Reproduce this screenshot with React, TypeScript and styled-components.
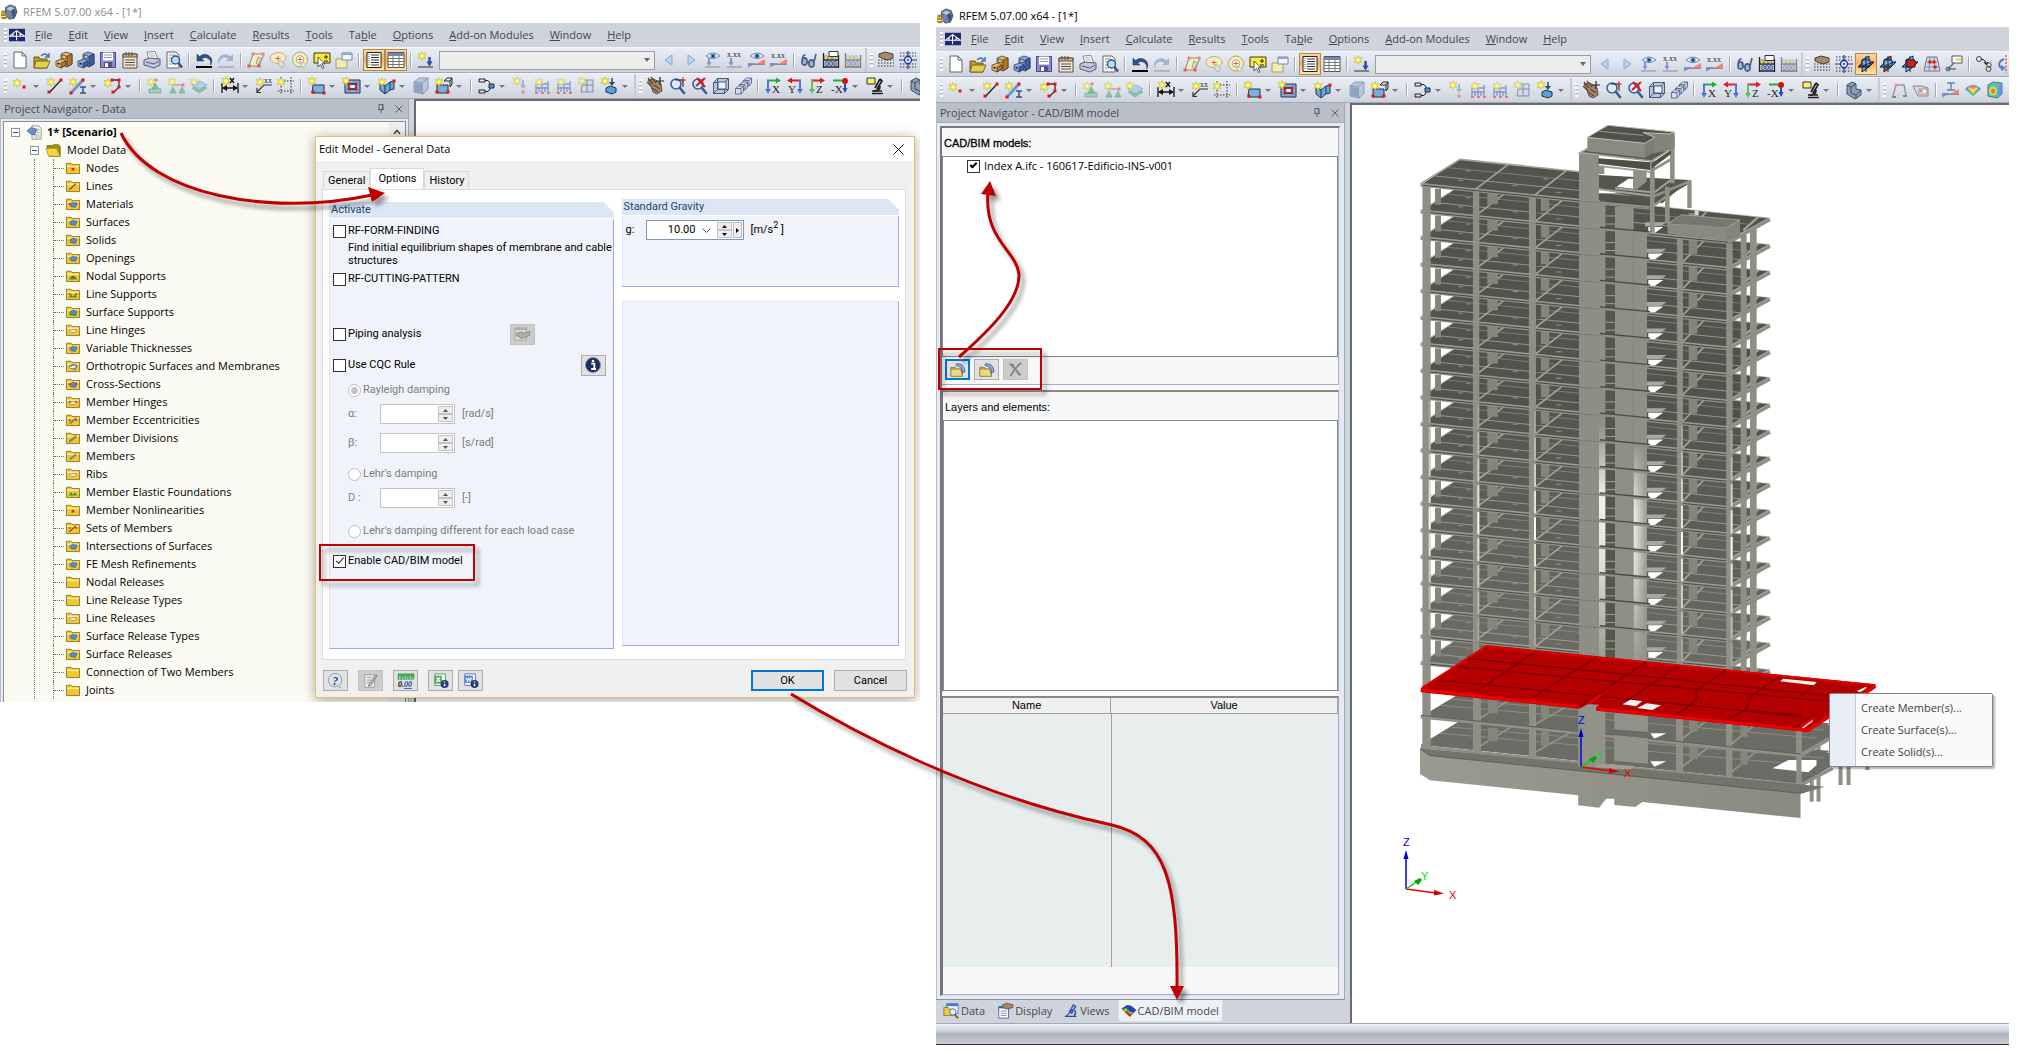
import React from "react";
import styled, { createGlobalStyle, css } from "styled-components";

const ui = `"Open Sans", "Noto Sans", sans-serif`;
const arial = `"Liberation Sans", Arial, sans-serif`;
const dialogFont = `Roboto, "Liberation Sans", sans-serif`;

const Global = createGlobalStyle`
  *, *::before, *::after { box-sizing: border-box; }
  body { margin: 0; background: #fff; font: 11px/14px ${ui}; color: #000; }
  button, input, select { font: inherit; color: inherit; margin: 0; padding: 0; border-radius: 0; }
  ul { list-style: none; margin: 0; padding: 0; }
  svg { display: block; flex: none; overflow: visible; }
  a { color: inherit; text-decoration: none; }
`;

/* ---------- icon drawings (18 x 18) ---------- */

const Star = ({ x = 4, y = 4 }: { x?: number; y?: number }) => (
  <g transform={`translate(${x} ${y})`}>
    <path d="M0-4.5L1.2-1.8 3.800-2.800 2.6 0 3.800 2.800 1.2 1.8 0 4.5-1.2 1.8-3.800 2.800-2.6 0-3.800-2.800-1.2-1.8z" fill="#fbf03c" stroke="#b4aa3c" strokeWidth=".5" />
    <circle r="1.3" fill="#fffbd0" />
  </g>
);
const Dot = ({ x, y, c = "#e81414" }: { x: number; y: number; c?: string }) => (
  <rect x={x - 1.5} y={y - 1.5} width="3" height="3" fill={c} />
);
const Lens = () => (
  <g>
    <circle cx="8" cy="7" r="5" fill="#dcebfa" stroke="#3c5c9c" strokeWidth="1.6" />
    <path d="M12 11l4 5" stroke="#3c5c9c" strokeWidth="2.6" strokeLinecap="round" />
  </g>
);
const Cabinet = ({ c, d }: { c: string; d: string }) => (
  <g stroke="#333" strokeWidth=".7">
    <path d="M6 3l5-2 6 2v10l-5 3-6-3z" fill={c} />
    <path d="M12 5l5-2v10l-5 3z" fill={d} />
    <path d="M1 10l6-2 4 2v4l-5 3-5-2z" fill={c} />
    <path d="M6 12l5-2v4l-5 3z" fill={d} />
    <path d="M7 4l4 1v3l-4-1z" fill="#fff" fillOpacity=".35" />
    <path d="M2.500 12.500l2 .5" stroke="#111" strokeWidth="1.500" />
  </g>
);
const Abacus = ({ dim }: { dim?: boolean }) => (
  <g opacity={dim ? 0.5 : 1}>
    <path d="M1.500 17V2M16.500 17V4M1 16h16M1 9h16" stroke="#222" strokeWidth="1.300" />
    {[4, 8, 12].map((x) => <ellipse key={x} cx={x} cy="6.500" rx="1.700" ry="2" fill="#e8dc70" stroke="#665" strokeWidth=".6" />)}
    {[5, 9, 13].map((x) => <ellipse key={x} cx={x} cy="12.500" rx="1.800" ry="2.200" fill="#8fa8ee" stroke="#335" strokeWidth=".6" />)}
    {!dim && <path d="M7 .5h9v5H7z" fill="#fff" stroke="#334" />}
  </g>
);
const Eye = ({ y = 5 }: { y?: number }) => (
  <g>
    <path d={`M2 ${y}q7-6 14 0q-7 5-14 0z`} fill="#eef3fb" stroke="#7686a8" />
    <circle cx="9" cy={y} r="2.600" fill="#5c84cc" />
    <circle cx="9" cy={y} r="1" fill="#123" />
  </g>
);
const Wedge = () => (
  <g>
    <path d="M0 16.500V12l9 0z" fill="#8c8ce0" />
    <path d="M17 8v5H8z" fill="#f08080" />
    <path d="M0 13.500h17" stroke="#889" />
  </g>
);
const Txt = ({ x, y, s = 7, c = "#222", children }: { x: number; y: number; s?: number; c?: string; children: string }) => (
  <text x={x} y={y} fontSize={s} fill={c} fontFamily="Liberation Serif, serif">{children}</text>
);
const Plane = ({ a, b }: { a: string; b: string }) => (
  <g stroke="#123" strokeWidth="1">
    <path d="M5 5l7-4v11l-7 5z" fill={b} />
    <path d="M1 12l5-5h11l-5 5z" fill={a} />
    <path d="M5 5h8v6H5z" fill="#7cc4f0" fillOpacity=".8" />
    <path d="M9 1v16M1 12l16-5" stroke="#136" />
  </g>
);
const Axis = ({ h, v, t, flip }: { h: string; v: string; t: string; flip?: boolean }) => (
  <g>
    <g transform={flip ? "translate(18 0) scale(-1 1)" : undefined}>
      <path d="M3 3.500h10" stroke={h} strokeWidth="2" />
      <path d="M12 .5l5 3-5 3z" fill={h} />
      <path d="M4 3v11" stroke={v} strokeWidth="2" />
      <path d="M1.500 12h5L4 17z" fill={v} />
      <path d="M4 3v13" stroke="#fff" strokeWidth=".5" />
    </g>
    <Txt x={flip ? 2 : 8} y={16} s={11}>{t}</Txt>
  </g>
);
const Frame = () => (
  <g stroke="#5570b8" fill="none" strokeWidth="1.300">
    <path d="M2 16V7h12v9M2 11h12M8 16V7M14 4v3M5 10v5M11 10v5" />
    <path d="M1 16h3M7 16h3M13 16h3" stroke="#e05050" strokeWidth="2" />
  </g>
);

const icons: Record<string, React.ReactNode> = {
  app: (<g><path d="M5 4l5-3 6 2 2 6-3 7-6 1-4-5z" fill="#6d85a8" stroke="#26364e" strokeWidth=".8" /><path d="M6 5l5-2 4 2-4 3z" fill="#b8cade" /><path d="M11 8l4-3 2 5-3 6z" fill="#3e5678" /><text x="0" y="17" fontSize="13" fontWeight="700" fill="#f6c820" stroke="#6b4d00" strokeWidth=".6" fontFamily="Liberation Sans, sans-serif">5</text></g>),
  bridge: (<g><path d="M0 2h18v14H0z" fill="#1d2a6e" /><path d="M0 10.500h18M8.500 4v11M1 10L8.500 4 17 10M4.500 7v3M12.500 7v3" stroke="#fff" strokeWidth="1.200" fill="none" /></g>),
  new: (<path d="M3 1h8l4 4v12H3zM11 1v4h4" fill="#fff" stroke="#666" />),
  open: (<g><path d="M1 6h5l1 2h7v9H1z" fill="#b79e2c" stroke="#6c5c14" /><path d="M3 10h14l-3 7H1z" fill="#e3cd52" stroke="#7a6818" /><path d="M8 5q4-4 7 0M16 2v4h-4" fill="none" stroke="#4878b0" strokeWidth="1.500" /></g>),
  cabO: <Cabinet c="#f0b45c" d="#b87420" />,
  cabB: <Cabinet c="#86a8ee" d="#3c5cb0" />,
  save: (<g><path d="M1.500 1.500h15v15h-15z" fill="#8c86d8" stroke="#4b4690" /><path d="M4 1.500h10v8H4z" fill="#fff" /><path d="M5 4h8M5 6.500h8" stroke="#99a" /><path d="M5 11h8v6H5z" fill="#55507c" /><path d="M6 12h3v4H6z" fill="#fff" /></g>),
  clip: (<g><path d="M2 3h14v14H2z" fill="#f4e8dc" stroke="#5a4a3c" /><path d="M2 3h14v3H2z" fill="#dcb890" stroke="#5a4a3c" /><path d="M5 1v4M8 1v4M11 1v4M4 9h10M4 11.500h10M4 14h10" stroke="#5a4a3c" /></g>),
  print: (<g><path d="M4 1l8-.5 3 8H6z" fill="#fff" stroke="#888" /><path d="M1 9l5-2 11 1v6l-6 3-10-3z" fill="#c4c6dc" stroke="#555a78" /><path d="M3 11l8 2 5-3" fill="none" stroke="#555a78" /><path d="M6 3l5 0M7 5l5 0" stroke="#aab" /></g>),
  preview: (<g><path d="M2 1h9l3 3v13H2z" fill="#f6f8f6" stroke="#667" /><path d="M4 4h6M4 7h4M4 10h3M4 13h4" stroke="#7a9" /><circle cx="10.500" cy="9" r="4" fill="#b8dcf6" stroke="#357" strokeWidth="1.300" /><path d="M13.500 12l3.500 4.500" stroke="#357" strokeWidth="2.400" /></g>),
  undo: (<g><path d="M2 3v7h7L6.500 8q5-4 9 2 .5 2 0 4 3-4 0-8-5-5-11-.5z" fill="#2e5288" stroke="#1c355e" strokeWidth=".5" /><path d="M1 16h16" stroke="#000" strokeWidth="2" /></g>),
  redo: (<g opacity=".75"><path d="M16 3v7H9l2.500-2q-5-4-9 2-.5 2 0 4-3-4 0-8 5-5 11-.5z" fill="#8ba3c6" /><path d="M1 16h16" stroke="#99a" strokeWidth="1.500" /></g>),
  selPara: (<g><path d="M6 3h11l-5 12H2z" fill="#f2eec4" stroke="#8c8870" /><path d="M11 6l4 2-4 6-2-2z" fill="#dcd8b8" stroke="#887" strokeWidth=".7" /><Dot x={6} y={3} c="#e88" /><Dot x={16} y={3} c="#e88" /><Dot x={2} y={15} c="#e55" /><Dot x={12} y={15} c="#e55" /></g>),
  selEll: (<g><ellipse cx="9" cy="7" rx="8" ry="5.500" fill="#f3eebc" stroke="#b8b08c" /><path d="M9 5v5M6.500 7.500h5" stroke="#e06060" /><path d="M11 9l5 4-3 4-4-4z" fill="#e2dfd6" stroke="#998" strokeWidth=".6" /></g>),
  selCirc: (<g><circle cx="9" cy="8.500" r="7.500" fill="#f3eebc" stroke="#b0a870" /><circle cx="9" cy="8.500" r="3.800" fill="#fff" stroke="#b0a870" /><path d="M9 6v5M6.500 8.500h5" stroke="#e06060" /><path d="M11 11l4 3-2 3-3-3z" fill="#eee" stroke="#998" strokeWidth=".6" /></g>),
  selBox: (<g><path d="M1 2h16v10H1z" fill="#fbe93c" stroke="#3a3a20" /><path d="M13 4v4M11 6h4M11 10h4" stroke="#222" /><path d="M5 6v10l2.500-2.500 2 4 1.500-.7-2-4h3z" fill="#fff" stroke="#222" strokeWidth=".7" /></g>),
  selWin: (<g><path d="M1 8h11v9H1z" fill="#f3eeb0" stroke="#a8a070" /><path d="M7 2h10v7H7z" fill="#f5f6fb" stroke="#7a86b0" /><path d="M7 3h10" stroke="#98a4d0" strokeWidth="2" /></g>),
  nav: (<g><path d="M2 1.500h14v15H2z" fill="#fff" stroke="#222" /><path d="M6 4h8M6 6.500h8M6 9h8M6 11.500h8M6 14h8" stroke="#333" /><path d="M4 3v12" stroke="#555" strokeDasharray="1 1" /></g>),
  table: (<g><path d="M1 1.500h16v15H1z" fill="#fff" stroke="#555" /><path d="M1 2h16v3H1z" fill="#7088b0" /><path d="M1 7.500h16M1 10.500h16M1 13.500h16M6 5v12M12 5v12" stroke="#777" /></g>),
  load: (<g><Star x={5} y={5} /><path d="M1 16h15" stroke="#555" strokeWidth="1.300" /><path d="M12.500 6v5" stroke="#2c4ca8" strokeWidth="2.500" /><path d="M9.500 10.500h6l-3 5z" fill="#2c4ca8" /></g>),
  triL: <path d="M12 4v10L5 9z" fill="#c0d2f0" stroke="#88a4d8" />,
  triR: <path d="M6 4v10l7-5z" fill="#c0d2f0" stroke="#88a4d8" />,
  eyeLoad: (<g><Eye y={5} /><path d="M5 7v5" stroke="#789ad0" strokeWidth="2" /><path d="M2.500 11h5L5 15z" fill="#789ad0" /><path d="M1 16h15" stroke="#889" /></g>),
  xxLoad: (<g><Txt x={1} y={6} s={8}>x.xx</Txt><path d="M5 7v5" stroke="#789ad0" strokeWidth="2" /><path d="M2.500 11h5L5 15z" fill="#789ad0" /><path d="M1 16h15" stroke="#889" /></g>),
  eyeW: (<g><Wedge /><Eye y={5} /></g>),
  xxW: (<g><Wedge /><Txt x={1} y={7} s={8}>x.xx</Txt></g>),
  glasses: (<g fill="none" stroke="#4a5c88" strokeWidth="1.600"><ellipse cx="4.500" cy="10.500" rx="2.600" ry="3.600" fill="#9fb2dc" /><ellipse cx="11.500" cy="12.500" rx="2.600" ry="3.600" fill="#9fb2dc" /><path d="M2.500 8q0-4 3-4M14 11l2-8M7 11l2 1" /></g>),
  abacus: <Abacus />,
  abacus2: <Abacus dim />,
  handGrid: (<g><path d="M1 9h16M1 12h16M1 15h16" stroke="#333" strokeDasharray="1.500 1.500" /><path d="M2 3l6-2 8 2v4l-6 2-8-3z" fill="#a88a6c" stroke="#4e3c2c" /></g>),
  grid: (<g><path d="M1 2h16M1 5h16M1 13h16M1 16h16" stroke="#333" strokeDasharray="1.500 1.500" /><path d="M9 0v18M0 9h18" stroke="#2030a0" strokeWidth="1.200" /><circle cx="9" cy="9" r="3.500" fill="#e4e8f4" stroke="#2030a0" strokeWidth="1.300" /><circle cx="9" cy="9" r="1" fill="#2030a0" /></g>),
  planeA: <Plane a="#e03020" b="#60b0e8" />,
  planeB: <Plane a="#7cc4f0" b="#d84030" />,
  planeC: (<g><Plane a="#7cc4f0" b="#7cc4f0" /><path d="M6 5h8v7H6z" fill="#e81818" stroke="#222" /></g>),
  mesh: (<g><path d="M4 2h10l3 14H1z" fill="#c6dce8" stroke="#778" /><path d="M3 7h12M2 12h14M7 2l-1 14M11 2l1 14" stroke="#889" /><Dot x={7} y={7} /><Dot x={11} y={7} /><Dot x={12} y={12} /></g>),
  snap: (<g><path d="M7 1h10v7H7z" fill="#fff" stroke="#556" /><path d="M11 3h5v3h-5z" fill="#f0e060" /><path d="M9 8l-6 6h8" fill="none" stroke="#5c74a0" strokeWidth="1.500" /><circle cx="3" cy="14" r="2" fill="none" stroke="#456" /></g>),
  rotate: (<g fill="none" stroke="#444"><circle cx="4" cy="4" r="2.500" /><circle cx="13.500" cy="14" r="2.500" /><circle cx="14" cy="10" r="2.200" /><path d="M6 4q5 1 5 5M9 7l2 2.500L13 7" stroke="#111" /></g>),
  mirror: (<g fill="none"><path d="M9 0v18" stroke="#c02020" strokeDasharray="2 1.500" /><path d="M7 4q-7 3-4 8l3 1M4 15l3-2-3-2" stroke="#5878c0" strokeWidth="2" /></g>),
  node: (<g><Star x={5} y={6} /><Dot x={12} y={10} /></g>),
  line: (<g><path d="M3 16L15 3" stroke="#222" strokeWidth="1.300" /><Star x={5} y={5} /><Dot x={3} y={15} /><Dot x={15} y={3} /></g>),
  member: (<g><path d="M2 16L14 3" stroke="#88b0dc" strokeWidth="3.500" /><path d="M2 16L14 3" stroke="#456" strokeWidth=".8" /><Star x={4} y={5} /><Dot x={2} y={16} /><Dot x={14} y={3} /><path d="M11 10h6M11 16h6M14 10v6" stroke="#345090" strokeWidth="1.500" /></g>),
  poly: (<g><path d="M7 3h8v7l-6 6" fill="none" stroke="#333" strokeWidth="1.300" /><Star x={4} y={6} /><Dot x={8} y={3} /><Dot x={15} y={3} /><Dot x={15} y={10} /><Dot x={9} y={15} /></g>),
  sup1: (<g opacity=".65"><Star x={5} y={5} /><Dot x={10} y={3} c="#e55" /><path d="M9 6l4 6H6z" fill="#58b070" stroke="#286" strokeWidth=".6" /><path d="M3 12h12v4H3z" fill="#8cc89c" stroke="#286" strokeWidth=".6" /></g>),
  sup2: (<g opacity=".65"><path d="M3 8h13" stroke="#a66" strokeWidth="1.200" /><Star x={4} y={5} /><Dot x={15} y={8} c="#e55" /><path d="M5 10l3 6H2zM14 10l3 6h-6z" fill="#68b880" stroke="#286" strokeWidth=".6" /></g>),
  sup3: (<g opacity=".7"><path d="M2 11l8-4 7 4-8 5z" fill="#74bc8c" stroke="#387" strokeWidth=".6" /><path d="M2 8l8-4 7 4-8 5z" fill="#9cc8ec" stroke="#579" strokeWidth=".6" /><Star x={4} y={5} /></g>),
  dim: (<g><path d="M1 6v10M17 6v10M2 11h14" stroke="#111" strokeWidth="1.300" /><path d="M6 8l-5 3 5 3zM12 8l5 3-5 3z" fill="#111" /><Star x={5} y={4} /><path d="M9 1l4 5M13 1L9 6" stroke="#111" strokeWidth="1.300" /></g>),
  xx: (<g><path d="M17 8H9L2 15M2 11v4.500h4" stroke="#333" fill="none" strokeWidth="1.200" /><Star x={5} y={5} /><Txt x={9} y={6} s={8}>xx</Txt></g>),
  dots: (<g><path d="M4 0v17M14 0v17M1 4h16M1 14h16" stroke="#333" strokeDasharray="1.500 1.500" /><Star x={4} y={5} /></g>),
  surf: (<g><path d="M5 8h11v8H4z" fill="#7cb0e0" stroke="#234" /><Star x={4} y={4} /><Dot x={5} y={15} /><Dot x={16} y={16} /></g>),
  opening: (<g><path d="M2 3h15v13H2z" fill="#7cb0e0" stroke="#234" /><path d="M6 7h7v5H6z" fill="#e8eef6" stroke="#123" strokeWidth="1.300" /><Star x={3} y={4} /><Dot x={6} y={7} /><Dot x={13} y={7} /><Dot x={6} y={12} /><Dot x={13} y={12} /></g>),
  surf3: (<g><path d="M2 6l5 3 5-4 4-1v8l-4 1-5 4-5-4z" fill="#6ca8d8" stroke="#235" /><path d="M7 9v8M12 5v8" stroke="#235" /><Star x={4} y={5} /><Dot x={16} y={4} /></g>),
  solid: (<g><path d="M2 5l5-4h9v11l-5 5-9-2z" fill="#b8c8dc" stroke="#7c8ca4" strokeWidth=".8" /><path d="M3 6l7 1v9l-7-1z" fill="#8ca4c4" /><path d="M2 5l8 1 6-5M10 6l1 11" fill="none" stroke="#7c8ca4" strokeWidth=".8" /></g>),
  solid2: (<g><path d="M2 8h11v8H2z" fill="#78acdc" stroke="#234" /><path d="M9 4h6v6M9 4l3-3h5v6l-2 3M15 4l2-3" fill="none" stroke="#222" /><Star x={4} y={5} /><Dot x={2} y={15} /><Dot x={13} y={15} /></g>),
  flow: (<g><path d="M1 2h6v3H1zM1 13h6v3H1zM7 3.500h3l3 4M7 14.500h3l3-4" fill="none" stroke="#222" /><path d="M11 7h5v4h-5z" fill="#4c90e0" stroke="#234" /></g>),
  loadN: (<g opacity=".8"><path d="M11 3v6" stroke="#88a8e0" strokeWidth="2" /><path d="M8 8h6l-3 4z" fill="#88a8e0" /><Star x={5} y={4} /><Dot x={11} y={15} c="#e77" /></g>),
  loadF: (<g opacity=".65"><Frame /><Star x={5} y={5} /></g>),
  loadS: (<g opacity=".65"><path d="M5 3h10v12H3z" fill="#c8d8ee" stroke="#567" /><path d="M4 8h11M9 3v12" stroke="#567" /><Star x={4} y={4} /></g>),
  loadC: (<g><path d="M11 1v6" stroke="#346" strokeWidth="1.500" /><path d="M8 5h6l-3 4z" fill="#346" /><path d="M5 11l4-2 6 2v4l-4 2-6-2z" fill="#58a0d8" stroke="#234" /><Star x={4} y={4} /></g>),
  hand: (<g><path d="M2 3l3 6 2 6 4 2 5-3-1-7-7-5z" fill="#a4886c" stroke="#4a3828" strokeWidth=".8" /><path d="M2 1l5 6M5 0l5 6M1 5l5 5M6 11l6 4M8 8l6 4" stroke="#5e4630" strokeWidth="1.300" /><path d="M14 0v8M10 4h8" stroke="#222" strokeWidth="1.200" /></g>),
  zoom: (<g><Lens /><path d="M7 3h8v7" fill="none" stroke="#222" /><path d="M15 0v6M12 3h6" stroke="#d22" /></g>),
  zoomX: (<g><Lens /><path d="M7 1l8 9M15 1L6 9" stroke="#d02020" strokeWidth="2" /></g>),
  cube: (<g fill="none" stroke="#4c5878"><path d="M1.500 5.500l4-4h11v11l-4 4h-11z" fill="#b8c8e4" /><path d="M5.500 1.500v11h11M5.500 12.500l-4 4M12.500 5.500h-11M12.500 5.500v11M12.500 5.500l4-4" /><path d="M6 5h8v7H6z" fill="#eef2fa" /></g>),
  cubes: (<g fill="#d0dcf0" stroke="#4c5878" strokeWidth=".8"><path d="M9.500 3.500l3-2.500h5v5l-2.500 3h-5.500zM9.500 3.500H15V9M15 3.500l2.500-2.500" /><path d="M5.500 7.500l3-2.500h5v5l-2.500 3H5.500zM5.500 7.500H11V13M11 7.500l2.500-2.500" /><path d="M1.500 11.500l3-2.500h5v5L7 17H1.500zM1.500 11.500H7V17M7 11.500L9.500 9" /></g>),
  ax: <Axis h="#20b030" v="#2048d0" t="X" />,
  ay: <Axis h="#d82020" v="#2048d0" t="Y" flip />,
  az: <Axis h="#d82020" v="#20b030" t="Z" />,
  amx: (<g><path d="M2 3.500h9" stroke="#20b030" strokeWidth="2" /><circle cx="14" cy="4" r="3" fill="#d01010" /><path d="M14 7v5" stroke="#2048d0" strokeWidth="2" /><path d="M11.500 11h5L14 16z" fill="#2048d0" /><Txt x={0} y={16} s={11}>-X</Txt></g>),
  scope: (<g><path d="M1 1h8v6H1z" fill="#fbf06c" stroke="#333" /><path d="M14 2l-5 9M14 2l2 2-5 8M8 14q6 0 6-5" stroke="#222" strokeWidth="1.800" fill="none" /><path d="M6 16.500h11M6 14l10 0" stroke="#222" strokeWidth="1.500" /></g>),
  lsolid: (<g><path d="M2 4l5-3 4 2v5l5 1v5l-6 4-8-5z" fill="#8aa0b8" stroke="#3c4c60" /><path d="M2 4l4 2v6l5 2v4M6 6l5-3M11 14l5-5" fill="none" stroke="#3c4c60" /></g>),
  frameG: (<g><path d="M3 15L6 4h8l2 10" fill="none" stroke="#999" strokeWidth="1.500" /><path d="M2 16h4M13 15h4" stroke="#5a5" strokeWidth="2" /><Dot x={6} y={4} c="#e99" /></g>),
  tag: (<g><path d="M1 5h8l7 2v8H6z" fill="#d8d8d8" stroke="#888" /><path d="M7 8h8v5H7z" fill="#f0f0f0" stroke="#999" /><Dot x={9} y={10} c="#e88" /></g>),
  ibeam: (<g><Wedge /><path d="M5 2h8M5 9h8M9 2v7" stroke="#68a" strokeWidth="1.500" /></g>),
  fan: (<g><path d="M9 15L1 8q8-8 16 0z" fill="#5c88e0" /><path d="M9 15L3 8q6-6 12 0z" fill="#58c878" /><path d="M9 13L4 7q5-4 10 0z" fill="#f0d850" /><path d="M9 8L5 6q4-3 8 0z" fill="#f08060" /></g>),
  ccube: (<g><path d="M2 4l5-3 9 1v11l-5 4-9-2z" fill="#58c0b0" stroke="#578" /><ellipse cx="7" cy="10" rx="4" ry="4.500" fill="#c8e050" /><ellipse cx="7" cy="10" rx="2" ry="2.500" fill="#f07040" /><path d="M13 5l3-3v11l-4 4z" fill="#6890e0" /></g>),
  data: (<g><path d="M4 1h13v11H4z" fill="#eef4ff" stroke="#4878c8" /><path d="M4 2h13" stroke="#4878c8" strokeWidth="3" /><path d="M1 5h5l1 2h4v7H1z" fill="#f2cc3c" stroke="#94761c" /><circle cx="11" cy="10" r="3.600" fill="#dcecfa" stroke="#567" /><path d="M13 13l4 4" stroke="#7a5230" strokeWidth="2" /></g>),
  display: (<g><path d="M2 4h11v13H2z" fill="#fff" stroke="#3860b8" /><path d="M2 5h11" stroke="#3860b8" strokeWidth="2" /><path d="M4 9h7M4 11.500h7M4 14h7" stroke="#88a" /><path d="M6 2l5-2 7 2v3l-6 2-6-2z" fill="#a48464" stroke="#4e3c2c" strokeWidth=".7" /></g>),
  views: (<g><path d="M1 16h15M3 16l8-9M12 1l3 2-5 9-3-2z" stroke="#2c4c9c" strokeWidth="1.500" fill="#90b0e4" /><path d="M14 8q2 4-1 7" stroke="#2c4c9c" strokeWidth="1.800" fill="none" /></g>),
  cad: (<g><path d="M0 6l6-4q5-1 9 3l3 3-8 8z" fill="#2040d8" /><path d="M0 6l10 10 5-5q-6-1-9-6z" fill="#28c048" /><path d="M2 8l8 8 4-4q-6-1-9-6z" fill="#f0e020" /><path d="M4 10l6 6 3-3q-4-1-7-5z" fill="#e03020" /><path d="M0 6l6-4q5-1 9 3l3 3-8 8z" fill="none" stroke="#222" strokeWidth=".6" /></g>),
  folderArrow: (<g><path d="M1 6h5l1 2h7v8H1z" fill="#cdb648" stroke="#7c6c20" strokeWidth=".8" /><path d="M1 8h11l2 8H1z" fill="#e9d987" stroke="#8c7c30" strokeWidth=".8" /><path d="M7 2q9-1 10 9l-3 1Q14 5 7 4z" fill="#90a8dc" stroke="#334c80" strokeWidth=".8" /></g>),
  del: <path d="M2 2q6 5 13 14M16 1Q8 7 3 17M5 2l3 6M11 12l2 3" stroke="#84847c" strokeWidth="2.200" fill="none" />,
  help: (<g><circle cx="8" cy="8" r="7.500" fill="#dde4ef" stroke="#8c96a8" /><path d="M12 13l3 4-6-2z" fill="#dde4ef" stroke="#8c96a8" strokeWidth=".6" /><text x="5" y="13" fontSize="13" fontWeight="700" fontStyle="italic" fill="#26408c" fontFamily="Liberation Serif, serif">?</text></g>),
  edit: (<g><path d="M2 2h11v14H2z" fill="#eeeee8" stroke="#999" /><path d="M4 5h6M4 8h5M4 11h4" stroke="#999" /><path d="M16 3l-7 11-3 1 1-3 7-10z" fill="#b4b4ac" stroke="#777" strokeWidth=".8" /></g>),
  units: (<g><path d="M0 1h18v6H0z" fill="#48b058" stroke="#2c7c3c" strokeWidth=".6" /><path d="M2 7V4M5 7V5M8 7V4M11 7V5M14 7V4M17 7V5" stroke="#e4ffe8" strokeWidth=".8" /><text x="0" y="16" fontSize="9" fontWeight="700" fontStyle="italic" fontFamily="Liberation Serif, serif">0.<tspan fill="#2848a8" textDecoration="underline">00</tspan></text></g>),
  xls: (<g><path d="M2 1h12v13H2z" fill="#f4fbf4" stroke="#4a9a50" /><path d="M2 3h8v9H2z" fill="#58a860" /><path d="M4 5l4 5M8 5l-4 5" stroke="#fff" strokeWidth="1.500" /><circle cx="13" cy="12.500" r="4.500" fill="#263c78" /><path d="M13 12v3M13 9.500v1.300" stroke="#fff" strokeWidth="1.600" /></g>),
  doc: (<g><path d="M2 1h12v13H2z" fill="#f4f8fd" stroke="#4878c0" /><path d="M2 3h9v8H2z" fill="#5080cc" /><path d="M3.500 5l1.500 4 1.500-3L8 9l1.500-4" fill="none" stroke="#fff" strokeWidth="1.300" /><circle cx="13" cy="12.500" r="4.500" fill="#263c78" /><path d="M13 12v3M13 9.500v1.300" stroke="#fff" strokeWidth="1.600" /></g>),
  info: (<g><circle cx="9" cy="9" r="8.500" fill="#1c2c60" stroke="#8894b8" /><path d="M7 7.500h3.500V13M7 13.500h5.500" stroke="#fff" strokeWidth="2" fill="none" /><circle cx="9" cy="4.500" r="1.500" fill="#fff" /></g>),
  pipe: (<g><path d="M1 2h13v14H1z" fill="#d8d8d0" stroke="#999" strokeWidth=".8" /><path d="M1 3.500h13" stroke="#aaa" strokeWidth="2" /><path d="M3 8l5-1 4 1 6-2v4l-5 3-6 1-1-2-3-1z" fill="#b0b0a6" stroke="#808078" strokeWidth=".8" /></g>),
  modelDoc: (<g><path d="M6 1h8l3 3v13H6z" fill="#f4f4f4" stroke="#888" /><path d="M12 6h3M12 9h3M9 12h6M9 14.500h6" stroke="#999" /><path d="M0 7l5-4 7 2-3 7-4-1z" fill="#6c90c4" stroke="#34507c" strokeWidth=".7" /></g>),
  folderOpen: (<g><path d="M1 4h6l1-1h6l2 2v11H4z" fill="#a08c1c" stroke="#6c5c10" strokeWidth=".8" /><path d="M0 7h12l4 9H3z" fill="#f0d83c" stroke="#94801c" strokeWidth=".8" /></g>),
};

const Icon = ({ n, s = 18 }: { n: string; s?: number }) => (
  <svg width={s} height={s} viewBox="0 0 18 18" aria-hidden="true">{icons[n]}</svg>
);

/* ---------- page and window shells ---------- */

const Page = styled.main`
  position: relative;
  display: flex;
  align-items: flex-start;
  gap: 16px;
  min-height: 100vh;
  padding-right: 19px;
  overflow: hidden;
`;
const AppWindow = styled.section<{ $share: number; $tall?: boolean }>`
  position: relative;
  flex: ${(p) => p.$share} 1 0;
  min-width: 0;
  display: flex;
  flex-direction: column;
  overflow: hidden;
  ${(p) => p.$tall && css`padding-top: 4px; height: calc(100vh - 11px);`}
`;
const TitleBar = styled.header<{ $idle?: boolean }>`
  display: flex;
  align-items: center;
  gap: 6px;
  flex: none;
  height: 23px;
  padding-left: 1px;
  color: ${(p) => (p.$idle ? "#8c8c8c" : "#000")};
`;
const MenuBar = styled.nav`
  display: flex;
  align-items: center;
  flex: none;
  height: 24px;
  gap: 16px;
  padding-left: 4px;
  background: #cfd3dc;
  color: #43474e;
`;
const Grip = styled.span`
  flex: none;
  width: 3px;
  height: 14px;
  margin-right: 2px;
  background: repeating-linear-gradient(#fff 0 2px, #aab0bc 2px 3px, transparent 3px 4px);
`;
const MenuLogo = styled.span`
  display: flex;
  margin: 0 -6px 0 -16px;
`;
const MenuLink = styled.a`
  white-space: nowrap;
`;
const ToolBar = styled.div`
  display: flex;
  align-items: center;
  flex: none;
  height: 26px;
  padding-left: 4px;
  overflow: hidden;
  background: linear-gradient(#e9edf6, #dde1ea 50%, #ced2dc);
  border-top: 1px solid #f3f5fa;
  border-bottom: 1px solid #a5a9b3;
`;
const ToolButton = styled.button<{ $on?: boolean }>`
  flex: none;
  display: grid;
  place-items: center;
  width: 22px;
  height: 22px;
  border: 1px solid ${(p) => (p.$on ? "#b08a50" : "transparent")};
  background: ${(p) => (p.$on ? "linear-gradient(#fcd9a8, #f9ae5a 45%, #fde9a0)" : "none")};
`;
const SplitButton = styled(ToolButton)`
  display: flex;
  align-items: center;
  gap: 3px;
  width: 35px;
  padding-left: 3px;
  border: 0;
`;
const Separator = styled.span`
  flex: none;
  width: 2px;
  height: 14px;
  margin: 0 3px;
  border-left: 1px solid #a4a8b2;
  border-right: 1px solid #fff;
`;
const GroupEnd = styled.span`
  flex: none;
  width: 2px;
  height: 24px;
  margin: 0 3px 0 1px;
  background: #c5cad5;
`;
const ToolSelect = styled.select`
  flex: none;
  width: 216px;
  height: 19px;
  margin: 0 3px 0 2px;
  appearance: none;
  border: 1px solid #9b9ea4;
  background: #ededed url("data:image/svg+xml,%3Csvg xmlns='http://www.w3.org/2000/svg' width='8' height='5'%3E%3Cpath d='M1 0h6L4 4z' fill='%23666'/%3E%3C/svg%3E") no-repeat right 3px center;
`;
const Caret = () => (
  <svg width="6" height="3" viewBox="0 0 6 3" aria-hidden="true"><path d="M0 0h6L3 3z" fill="#707684" /></svg>
);

const menus = [["F", "", "ile"], ["E", "", "dit"], ["V", "", "iew"], ["I", "", "nsert"], ["C", "", "alculate"], ["R", "", "esults"], ["T", "", "ools"], ["b", "Ta", "le"], ["O", "", "ptions"], ["A", "", "dd-on Modules"], ["W", "", "indow"], ["H", "", "elp"]];

const bar1 = "new open cabO cabB save clip print preview | undo redo | selPara selEll selCirc selBox selWin | nav table | load = triL triR eyeLoad xxLoad eyeW xxW | glasses abacus abacus2 / handGrid grid planeA planeB planeC mesh snap | rotate mirror".split(" ");
const bar2 = "node+ line member+ poly+ | sup1 sup2 sup3 | dim+ xx dots | surf+ opening+ surf3+ solid solid2+ | flow+ loadN loadF loadF loadS loadC+ / hand zoom zoomX cube cubes | ax ay az amx+ scope+ | lsolid+ / frameG tag | ibeam fan ccube".split(" ");

function Tools({ items, on }: { items: string[]; on: string[] }) {
  return (
    <ToolBar role="toolbar">
      <Grip />
      {items.map((it, i) => {
        if (it === "|") return <Separator key={i} />;
        if (it === "=") return <ToolSelect key={i} aria-label="Load case" defaultValue=""><option value=""></option></ToolSelect>;
        if (it === "/") return <React.Fragment key={i}><GroupEnd /><Grip /></React.Fragment>;
        if (it.endsWith("+")) return <SplitButton key={i} aria-label={it.slice(0, -1)}><Icon n={it.slice(0, -1)} /><Caret /></SplitButton>;
        return <ToolButton key={i} aria-label={it} $on={on.includes(it)}><Icon n={it} /></ToolButton>;
      })}
    </ToolBar>
  );
}

function Chrome({ idle, on }: { idle?: boolean; on: string[] }) {
  return (
    <>
      <TitleBar $idle={idle}><Icon n="app" s={16} />RFEM 5.07.00 x64 - [1*]</TitleBar>
      <MenuBar>
        <Grip />
        <MenuLogo><Icon n="bridge" s={16} /></MenuLogo>
        {menus.map(([k, a, b]) => <MenuLink href="#" key={a + k + b}>{a}<u>{k}</u>{b}</MenuLink>)}
      </MenuBar>
      <Tools items={bar1} on={on} />
      <Tools items={bar2} on={[]} />
    </>
  );
}

const Workspace = styled.div`
  display: flex;
  flex: 1;
  min-height: 0;
  gap: 5px;
  background: #cfd3dc;
`;
const Dock = styled.aside`
  flex: none;
  width: 409px;
  display: flex;
  flex-direction: column;
  background: #e6eaf3;
  border-left: 1px solid #b6bcc8;
  border-right: 1px solid #a4aab6;
`;
const DockHeader = styled.div`
  display: flex;
  align-items: center;
  flex: none;
  height: 20px;
  padding: 0 4px 0 3px;
  gap: 8px;
  background: #b8bfc9;
  border-bottom: 1px solid #a5acb8;
  color: #474b52;
  span { flex: 1; }
`;
const HeaderButton = styled.button`
  display: grid;
  place-items: center;
  width: 10px;
  height: 14px;
  border: 0;
  background: none;
`;
const DockTitle = ({ children }: { children: string }) => (
  <DockHeader>
    <span>{children}</span>
    <HeaderButton aria-label="Pin"><svg width="8" height="9" viewBox="0 0 8 9"><path d="M1 5.500h6M2 5V.5h4V5M4 6v3M5.500 1v4" stroke="#5c626c" fill="none" /></svg></HeaderButton>
    <HeaderButton aria-label="Close"><svg width="8" height="8" viewBox="0 0 8 8"><path d="M.5.5l7 7M7.500.5l-7 7" stroke="#5c626c" /></svg></HeaderButton>
  </DockHeader>
);
const Canvas = styled.div`
  flex: 1;
  min-width: 0;
  position: relative;
  overflow: hidden;
  background: #fff;
  border-left: 2px solid #6a6a6a;
  border-top: 2px solid #6a6a6a;
`;

/* ---------- tree ---------- */

const TreeBox = styled.div`
  display: flex;
  flex: 1;
  margin: 2px 2px 0;
  background: #fbfbf3;
  border: 1px solid #8a8e96;
  border-bottom: 0;
`;
const ScrollTrack = styled.div`
  width: 16px;
  padding: 7px 4px;
  background: #f0f0f0;
`;
const Tree = styled.ul`
  flex: 1;
  padding: 1px 0 3px 7px;
`;
const TreeRow = styled.div<{ $strong?: boolean }>`
  display: flex;
  align-items: center;
  height: 18px;
  gap: 5px;
  white-space: nowrap;
  font-weight: ${(p) => (p.$strong ? 700 : 400)};
`;
const Toggle = styled.button`
  width: 9px;
  height: 9px;
  margin-right: 2px;
  border: 1px solid #8896a4;
  background: linear-gradient(#3c5070, #3c5070) center / 5px 1px no-repeat #fff;
`;
const Branch = styled.ul`
  margin-left: 19px;
`;
const Leaves = styled.ul`
  margin-left: 4px;
  padding-left: 18px;
  border-left: 1px dotted #777;
`;
const Leaf = styled(TreeRow)`
  border-left: 1px dotted #777;
  gap: 6px;
  &::before { content: ""; width: 10px; margin-right: -4px; border-top: 1px dotted #777; }
`;

const FolderIcon = ({ k }: { k: string }) => (
  <svg width="14" height="12" viewBox="0 0 15 14" preserveAspectRatio="none" aria-hidden="true">
    <path d="M.5 1.500h5l1 1.500h8v10.500H.5z" fill="#edc82e" stroke="#8c741c" />
    <path d="M1 4h13v2H1z" fill="#fbe98c" />
    {k.includes("b") && <path d="M4 7l3-2 5 1-2 5-5-1z" fill="#5c8cd0" stroke="#2c4c80" strokeWidth=".6" />}
    {k.includes("r") && <path d="M6 7h3v3H6z" fill="#d22" />}
    {k.includes("d") && <path d="M3.500 11.500l7-7" stroke="#7a3a20" strokeWidth="1.300" />}
    {k.includes("D") && <path d="M4 11l7-6" stroke="#8a8a70" strokeWidth="2.500" />}
    {k.includes("g") && <path d="M3 11l2.500-4L8 11zM7 11l2.500-4 2.500 4z" fill="#3a9a48" />}
    {k.includes("w") && <path d="M3.500 9l3-2.500h5L9 10H5z" fill="#f0f2f4" stroke="#778" strokeWidth=".7" />}
    {k.includes("R") && <path d="M3 6h2v2H3zM10 6h2v2h-2z" fill="#d22" />}
  </svg>
);

const nodes: [string, string][] = [
  ["Nodes", "r"], ["Lines", "d"], ["Materials", "bR"], ["Surfaces", "b"], ["Solids", "b"], ["Openings", "b"], ["Nodal Supports", "rg"],
  ["Line Supports", "gR"], ["Surface Supports", "gb"], ["Line Hinges", "w"], ["Variable Thicknesses", "b"],
  ["Orthotropic Surfaces and Membranes", "wb"], ["Cross-Sections", "Rb"], ["Member Hinges", "wR"], ["Member Eccentricities", "DR"],
  ["Member Divisions", "Dd"], ["Members", "D"], ["Ribs", "w"], ["Member Elastic Foundations", "g"], ["Member Nonlinearities", "r"],
  ["Sets of Members", "dR"], ["Intersections of Surfaces", "b"], ["FE Mesh Refinements", "b"], ["Nodal Releases", ""],
  ["Line Release Types", ""], ["Line Releases", "w"], ["Surface Release Types", "b"], ["Surface Releases", "b"],
  ["Connection of Two Members", ""], ["Joints", ""],
];

/* ---------- dialog ---------- */

const Dialog = styled.section`
  position: absolute;
  top: 136px;
  right: 5px;
  width: 600px;
  padding-bottom: 6px;
  background: #f0f0f0;
  border: 1px solid #e9bf62;
  box-shadow: 0 2px 12px rgba(0, 0, 0, 0.35);
  font-family: ${dialogFont};
`;
const DialogTitle = styled.header`
  display: flex;
  justify-content: space-between;
  align-items: center;
  height: 24px;
  padding: 0 10px 0 3px;
  background: #fff;
  font-family: ${ui};
`;
const CloseButton = styled.button`
  display: grid;
  border: 0;
  background: none;
`;
const Tabs = styled.div`
  display: flex;
  align-items: flex-end;
  padding: 7px 0 0 7px;
`;
const Tab = styled.button<{ $on?: boolean }>`
  height: ${(p) => (p.$on ? 21 : 18)}px;
  padding: 0 ${(p) => (p.$on ? 7 : 4)}px;
  border: 1px solid #d9d9d9;
  border-bottom: 0;
  background: ${(p) => (p.$on ? "#fff" : "#f0f0f0")};
`;
const TabPanel = styled.div`
  display: flex;
  gap: 8px;
  align-items: stretch;
  height: 471px;
  margin: 0 8px 0 6px;
  padding: 9px 6px 10px;
  background: #fff;
  border: 1px solid #dcdcdc;
`;
const Column = styled.div<{ $w: number; $top?: number; $bottom?: number }>`
  flex: ${(p) => p.$w} 1 0;
  min-width: 0;
  display: flex;
  flex-direction: column;
  gap: 14px;
  padding: ${(p) => p.$top ?? 0}px 0 ${(p) => p.$bottom ?? 0}px;
`;
const Group = styled.fieldset<{ $fill?: boolean }>`
  min-width: 0;
  margin: 0;
  padding: 0 0 0 3px;
  border: 1px solid;
  border-color: #dce6f4 #a6a6ea #a6a6ea #dce6f4;
  background: #f0f4fa;
  ${(p) => (p.$fill ? "flex: 1;" : "height: 88px;")}
`;
const Legend = styled.div`
  height: 17px;
  margin: -1px -1px 0 -4px;
  padding: 1px 2px 0;
  background: linear-gradient(225deg, #fff 7px, #dce6f4 8px);
  border-bottom: 1px solid #fff;
  color: #23466e;
`;
const Row = styled.div<{ $mt?: number; $in?: number; $off?: boolean }>`
  display: flex;
  align-items: center;
  height: 20px;
  margin-top: ${(p) => p.$mt ?? 0}px;
  padding-left: ${(p) => p.$in ?? 0}px;
  color: ${(p) => (p.$off ? "#7c7c7c" : "#000")};
  white-space: nowrap;
`;
const Check = styled.input`
  appearance: none;
  flex: none;
  width: 13px;
  height: 13px;
  margin: 0 2px 0 0;
  border: 1px solid #333;
  background: #fff;
  display: grid;
  place-items: center;
  &[type="radio"] { border-radius: 50%; border-color: #c0c0c0; }
  &[type="radio"]:checked::after { content: ""; width: 7px; height: 7px; border-radius: 50%; background: #c4c4c4; }
  &[type="checkbox"]:checked::after { content: ""; width: 8px; height: 4px; border: solid #333; border-width: 0 0 1px 1px; transform: rotate(-48deg) translate(1px, -1px); }
`;
const Hint = styled.p`
  margin: 0 0 0 15px;
  line-height: 13px;
  width: 264px;
`;
const Spacer = styled.span`
  flex: 1;
`;
const IconButton = styled.button<{ $off?: boolean; $gap?: number; $focus?: boolean }>`
  display: grid;
  place-items: center;
  width: 25px;
  height: 21px;
  margin-right: ${(p) => p.$gap ?? 0}px;
  border: ${(p) => (p.$focus ? "2px solid #0078d7" : p.$off ? "1px solid #c2c2c2" : "1px solid #adadad")};
  background: ${(p) => (p.$off ? "#cccccc" : "#e1e1e1")};
`;
const FieldLabel = styled.label<{ $w: number }>`
  width: ${(p) => p.$w}px;
`;
const SpinBox = styled.span<{ $w: number; $active?: boolean }>`
  display: flex;
  align-items: center;
  width: ${(p) => p.$w}px;
  height: 20px;
  margin-right: 7px;
  padding: 1px;
  background: #fff;
  border: 1px solid ${(p) => (p.$active ? "#7a9ab8" : "#c4c4c4")};
  input { flex: 1; min-width: 0; height: 14px; border: 0; outline: 0; background: none; text-align: right; }
`;
const Steps = styled.span`
  display: flex;
  flex-direction: column;
  width: 15px;
  button { display: grid; place-items: center; height: 8px; border: 1px solid #c4c4c4; background: #eee; }
`;
const DropButton = styled.button`
  display: grid;
  place-items: center;
  width: 21px;
  height: 14px;
  border: 0;
  background: none;
`;
const MoreButton = styled(DropButton)`
  width: 9px;
  height: 16px;
  margin-left: 1px;
  border: 1px solid #bbb;
  background: #eee;
`;
const DialogFooter = styled.footer`
  display: flex;
  align-items: center;
  padding: 10px 7px 0;
`;
const PushButton = styled.button<{ $main?: boolean }>`
  width: 73px;
  height: 21px;
  margin-left: 10px;
  background: #e1e1e1;
  border: ${(p) => (p.$main ? "2px solid #0078d7" : "1px solid #adadad")};
`;
const Sup = styled.sup`
  font-size: 9px;
  line-height: 0;
`;
const Tri = ({ d, c = "#555" }: { d: "u" | "d" | "r"; c?: string }) => (
  <svg width="5" height="5" viewBox="0 0 5 5" aria-hidden="true"><path d={d === "u" ? "M0 4h5L2.500 1z" : d === "d" ? "M0 1h5L2.500 4z" : "M1 0v5l3-2.500z"} fill={c} /></svg>
);
const StepButtons = ({ off }: { off?: boolean }) => (
  <Steps>
    <button aria-label="Increase" disabled={off}><Tri d="u" c={off ? "#555" : "#000"} /></button>
    <button aria-label="Decrease" disabled={off}><Tri d="d" c={off ? "#555" : "#000"} /></button>
  </Steps>
);

function DampingField({ id, label, unit, mt }: { id: string; label: string; unit: string; mt: number }) {
  return (
    <Row $mt={mt} $in={15} $off>
      <FieldLabel $w={32} htmlFor={id}>{label}</FieldLabel>
      <SpinBox $w={75}><input id={id} disabled /><StepButtons off /></SpinBox>
      {unit}
    </Row>
  );
}

function ModelDialog() {
  return (
    <Dialog role="dialog" aria-label="Edit Model - General Data">
      <DialogTitle>
        Edit Model - General Data
        <CloseButton aria-label="Close"><svg width="11" height="11" viewBox="0 0 11 11"><path d="M.5.5l10 10M10.500.5l-10 10" stroke="#111" /></svg></CloseButton>
      </DialogTitle>
      <Tabs><Tab>General</Tab><Tab $on>Options</Tab><Tab>History</Tab></Tabs>
      <TabPanel>
        <Column $w={284} $top={3}>
          <Group $fill>
            <Legend>Activate</Legend>
            <Row $mt={2}><Check type="checkbox" id="form" /><label htmlFor="form">RF-FORM-FINDING</label></Row>
            <Hint>Find initial equilibrium shapes of membrane and cable structures</Hint>
            <Row $mt={2}><Check type="checkbox" id="cut" /><label htmlFor="cut">RF-CUTTING-PATTERN</label></Row>
            <Row $mt={35}><Check type="checkbox" id="pipe" /><label htmlFor="pipe">Piping analysis</label><Spacer /><IconButton $off $gap={78} aria-label="Piping settings"><Icon n="pipe" s={16} /></IconButton></Row>
            <Row $mt={11}><Check type="checkbox" id="cqc" /><label htmlFor="cqc">Use CQC Rule</label><Spacer /><IconButton $gap={7} aria-label="Info"><Icon n="info" s={16} /></IconButton></Row>
            <Row $mt={5} $in={15} $off><Check type="radio" name="damp" id="ray" defaultChecked disabled /><label htmlFor="ray">Rayleigh damping</label></Row>
            <DampingField id="alpha" label="α:" unit="[rad/s]" mt={4} />
            <DampingField id="beta" label="β:" unit="[s/rad]" mt={9} />
            <Row $mt={11} $in={15} $off><Check type="radio" name="damp" id="lehr" disabled /><label htmlFor="lehr">Lehr's damping</label></Row>
            <DampingField id="dd" label="D :" unit="[-]" mt={4} />
            <Row $mt={13} $in={15} $off><Check type="radio" name="damp" id="lehr2" disabled /><label htmlFor="lehr2">Lehr's damping different for each load case</label></Row>
            <Row $mt={10}><Check type="checkbox" id="bim" defaultChecked /><label htmlFor="bim">Enable CAD/BIM model</label></Row>
          </Group>
        </Column>
        <Column $w={277} $bottom={3}>
          <Group>
            <Legend>Standard Gravity</Legend>
            <Row $mt={4}>
              <FieldLabel $w={20} htmlFor="grav">g:</FieldLabel>
              <SpinBox $w={98} $active>
                <input id="grav" defaultValue="10.00" />
                <DropButton aria-label="Values"><svg width="9" height="5" viewBox="0 0 9 5"><path d="M.5.5l4 4 4-4" fill="none" stroke="#555" /></svg></DropButton>
                <StepButtons />
                <MoreButton aria-label="More"><Tri d="r" c="#000" /></MoreButton>
              </SpinBox>
              <span>[m/s<Sup>2</Sup> ]</span>
            </Row>
          </Group>
          <Group $fill />
        </Column>
      </TabPanel>
      <DialogFooter>
        <IconButton $gap={10} aria-label="Help"><Icon n="help" s={16} /></IconButton>
        <IconButton $gap={10} $off aria-label="Edit"><Icon n="edit" s={16} /></IconButton>
        <IconButton $gap={10} aria-label="Units"><Icon n="units" s={16} /></IconButton>
        <IconButton $gap={5} aria-label="Export to spreadsheet"><Icon n="xls" s={16} /></IconButton>
        <IconButton aria-label="Export to document"><Icon n="doc" s={16} /></IconButton>
        <Spacer />
        <PushButton $main>OK</PushButton>
        <PushButton>Cancel</PushButton>
      </DialogFooter>
    </Dialog>
  );
}

/* ---------- CAD/BIM panel ---------- */

const PanelStack = styled.div`
  flex: 1;
  min-height: 0;
  display: flex;
  flex-direction: column;
  gap: 5px;
  margin: 3px 4px 3px 3px;
  background: #fbfbf3;
  border: 1px solid #e4e4e4;
  border-top: 2px solid #777;
  border-left: 2px solid #777;
  font-family: ${arial};
`;
const Pane = styled.div<{ $grow: number }>`
  flex: ${(p) => p.$grow} 1 0;
  min-height: 0;
  display: flex;
  flex-direction: column;
  background: #f7f7f7;
  border-right: 1px solid #a6a6ea;
`;
const LowerPane = styled(Pane)`
  border-top: 2px solid #888;
  border-left: 1px solid #777;
`;
const PaneLabel = styled.h2<{ $bold?: boolean }>`
  flex: none;
  margin: 0;
  height: 28px;
  padding: 8px 2px 0;
  font-size: 11px;
  line-height: 14px;
  font-weight: 400;
  -webkit-text-stroke: ${(p) => (p.$bold ? "0.3px #000" : 0)};
`;
const ListBox = styled.div`
  flex: 1;
  padding: 2px 0 0 24px;
  background: #fff;
  border: 1px solid #828790;
  font-family: ${ui};
`;
const ModelItem = styled.label`
  display: flex;
  align-items: center;
  height: 14px;
  gap: 4px;
  input { width: 13px; height: 13px; appearance: none; border: 1px solid #333; background: #fff; display: grid; place-items: center; }
  input::after { content: ""; width: 7px; height: 4px; border: solid #000; border-width: 0 0 2px 2px; transform: rotate(-45deg) translate(1px, -1px); }
`;
const ActionBar = styled.div`
  display: flex;
  gap: 4px;
  flex: none;
  height: 28px;
  padding: 2px 3px;
  border-bottom: 1px solid #a6a6ea;
`;
const PropertyTable = styled.table`
  flex: 1;
  display: flex;
  flex-direction: column;
  background: #e8eeee;
  thead, tbody { display: flex; }
  tbody { flex: 1; }
  tr { flex: 1; display: flex; }
  th, td { flex: 227; padding: 0; font-weight: 400; border-right: 1px solid #a0a0a0; }
  th { background: #f0f0f0; border-bottom: 1px solid #a0a0a0; font-size: 11px; line-height: 15px; }
  th:first-child, td:first-child { flex: 168; }
  td:last-child { border-right: 0; }
`;
const PaneFooter = styled.div`
  flex: none;
  height: 28px;
  border-bottom: 1px solid #a6a6ea;
`;
const BottomTabs = styled.nav`
  display: flex;
  align-items: center;
  flex: none;
  height: 24px;
  padding-left: 3px;
  gap: 4px;
  background: #cfd3dc;
  border-top: 1px solid #888e98;
  margin: 0 -1px;
`;
const BottomTab = styled.a<{ $on?: boolean }>`
  display: flex;
  align-items: center;
  gap: 2px;
  height: 22px;
  margin-bottom: 1px;
  padding: 0 3px;
  color: #474b52;
  border-radius: 0 0 4px 4px;
  background: ${(p) => (p.$on ? "#eef0f2" : "none")};
  border: solid ${(p) => (p.$on ? "#c4e4e6" : "transparent")};
  border-width: 0 1px 1px;
`;
const StatusBar = styled.footer`
  flex: none;
  height: 22px;
  border-top: 1px solid #a4a8b2;
  border-bottom: 1px solid #333;
  background: linear-gradient(#f0f2f6, #c9ced8 40%, #aab0ba 50%, #c4c9d3 90%);
`;
const ContextMenu = styled.ul`
  position: absolute;
  left: 477px;
  top: 588px;
  width: 164px;
  padding: 3px 1px;
  background: linear-gradient(to right, #e8edf6 25px, #c4c6ca 25px 26px, #fafafa 26px);
  border: 1px solid #868686;
  border-radius: 2px;
  box-shadow: 2px 2px 2px rgba(0, 0, 0, 0.3);
  button { display: block; width: 100%; height: 22px; padding-left: 30px; border: 0; background: none; text-align: left; color: #404247; }
`;

/* ---------- tower ---------- */

const wall = "#8f8f86";
const lite = "#a3a397";

function shade(i: number) {
  const v = Math.round(82 + Math.max(0, i - 8) * 2.5);
  return `rgb(${v},${v + 1},${v - 6})`;
}

function Storey({ i }: { i: number }) {
  const y = 225 + 79.7 * i;
  const f = (x: number) => y + (x - 62) * 0.1;
  const lit = Math.max(0, 1 - Math.abs(i - 12) / 5);
  const glow = `rgba(250,250,232,${lit})`;
  const right = i === 0 ? 750 : 985;
  const back = i === 0 ? 870 : 1110;
  const top = (x: number) => y - 77 + (x - 180) * 0.104;
  const col = (x: number, w: number, up = 80) => (
    <g key={x}>
      <rect x={x} y={f(x) + 4} width={w} height={up} fill={wall} />
      <rect x={x + w - 6} y={f(x) + 8} width="6" height={up - 12} fill={glow} />
      <path d={`M${x} ${f(x) + 4}v${up}`} stroke={lite} strokeWidth="1.500" />
    </g>
  );
  return (
    <g>
      {/* slab seen from above */}
      <path d={`M62 ${y}L180 ${top(180)}L${back} ${top(back)}L${right} ${f(right) - 4}z`} fill={shade(i)} />
      <g stroke={lite} strokeWidth="2.500" fill="none">
        <path d={`M105 ${y - 27}L${right + 40} ${y - 27 + (right - 65) * 0.1}`} />
        <path d={`M145 ${y - 52}L${right + 60} ${y - 52 + (right - 85) * 0.1}`} strokeWidth="1.500" />
        <path d={`M62 ${y - 4}L180 ${top(180)}L${back} ${top(back)}`} strokeWidth={i === 0 ? 5 : 2} />
        <path d={`M222 ${f(222)}L325 ${top(325)}M400 ${f(400)}L500 ${top(500)}`} strokeWidth="5" />
        {i > 0 && <path d={`M842 ${f(842)}L920 ${top(920)}`} strokeWidth="5" />}
        <path d={`M175 ${y - 14}h14M338 ${y + 1}h16M468 ${y + 22}h16M198 ${y - 42}h14M430 ${y - 18}h14`} stroke="#85857b" strokeWidth="4" />
      </g>
      {/* rear walls */}
      {i > 0 && (
        <g fill="#85857b">
          <rect x="262" y={y - 60} width="32" height="38" />
          <rect x="422" y={y - 45} width="26" height="44" />
          <rect x="105" y={y - 68} width="18" height="48" />
          <rect x="405" y={y - 46} width="17" height="50" fill={shade(i)} />
          <rect x="866" y={y + 4} width="26" height="44" />
          <path d={`M735 ${y + 32}h65l-18 12h-47z`} fill="#a8a89e" />
          <path d={`M745 ${y + 46}h45l-26 18h-19z`} fill="#fff" />
        </g>
      )}
      {/* front columns below the slab */}
      {[[68, 24], [220, 18], [388, 20]].map(([x, w]) => col(x, w))}
      {i > 0 && [[832, 17], [980, 18]].map(([x, w]) => col(x, w))}
      {i > 0 && (
        <g>
          <rect x="1022" y={f(985) - 22} width="18" height="84" fill={wall} />
          <rect x="1050" y={f(985) - 40} width="20" height="84" fill={wall} />
          <path d={`M985 ${f(985)}L1110 ${top(1110) + 4}`} stroke={wall} strokeWidth="11" />
          <path d={`M1030 ${f(985) - 36}L1075 ${f(985) - 76}`} stroke={lite} strokeWidth="7" />
          <path d={`M985 ${f(985) - 6}L1110 ${top(1110) - 2}`} stroke="#c6c6ba" strokeWidth="2" />
        </g>
      )}
      {/* slab edge */}
      <path d={`M62 ${y}L${right} ${f(right)}`} stroke={wall} strokeWidth="11" />
      <path d={`M62 ${y - 5}L${right} ${f(right) - 5}`} stroke="#bdbdb0" strokeWidth="1.500" />
      <path d={`M70 ${y + 1}L${right} ${f(right)}`} stroke="#4a4a44" strokeWidth="3" />
    </g>
  );
}

function Tower() {
  const levels = Array.from({ length: 19 }, (_, k) => 18 - k);
  return (
    <svg width="655" height="918" viewBox="1352 105 655 918" role="img" aria-label="Building model">
      <defs>
        <linearGradient id="core" x1="0" y1="0" x2="0" y2="1">
          <stop offset="0" stopColor="#8f8f86" /><stop offset=".48" stopColor="#909087" /><stop offset=".64" stopColor="#f2f2e4" /><stop offset=".76" stopColor="#e6e6d8" /><stop offset="1" stopColor="#96968c" />
        </linearGradient>
        <linearGradient id="coreWide" x1="0" y1="0" x2="1" y2="0">
          <stop offset="0" stopColor="#8f8f86" stopOpacity="0" /><stop offset="1" stopColor="#8f8f86" stopOpacity=".9" />
        </linearGradient>
        <linearGradient id="base" x1="0" y1="0" x2="1" y2="0"><stop offset="0" stopColor="#9a9a90" /><stop offset="1" stopColor="#8a8a80" /></linearGradient>
      </defs>
      {/* storeys under the highlighted slab and the basement */}
      <g transform="translate(1400 600) scale(.4005 .3333)">
        {[1028, 1045, 1100, 1120, 1167].map((x) => <path key={x} d={`M${x - 5} 330h10v${x < 1050 ? 275 : x > 1150 ? 180 : 225}h-10z`} fill={wall} />)}
        {[432, 350].map((y) => <path key={y} d={`M52 ${y + 2}L150 ${y - 70}L1072 ${y + 20}L1000 ${y + 110}z`} fill="#6e6e68" />)}
        {[434, 350].map((y) => (
          <g key={y}>
            <path d={`M52 ${y}L150 ${y - 68}L1130 ${y + 30}L1000 ${y + 118}z`} fill="#6c6c66" />
            <path d={`M100 ${y - 34}L1040 ${y + 64}M130 ${y - 52}L1060 ${y + 40}`} stroke="#8c8c82" strokeWidth="3" />
            <path d={`M190 ${y + 12}L280 ${y - 55}M330 ${y + 28}L430 ${y - 40}M700 ${y + 70}L780 ${y}M820 ${y + 90}L900 ${y + 10}`} stroke="#93938a" strokeWidth="5" />
            <path d={`M625 ${y + 50}h40l-30 16z`} fill="#fff" />
            <path d={`M220 ${y - 50}h24v40h-24zM352 ${y - 40}h20v44h-20zM722 ${y}h22v44h-22zM850 ${y + 10}h18v50h-18z`} fill="#85857b" />
          </g>
        ))}
        <path d="M930 505l40-25h70v15l-20 22z" fill="#fff" />
        {[[56, 20], [183, 18], [323, 16], [690, 16], [815, 14], [990, 12]].map(([x, w], k) => <rect key={x} x={x} y={270 + x * 0.12} width={w} height={170 + (k ? 10 : 0)} fill={wall} stroke={lite} strokeWidth="1" />)}
        <path d="M52 350L1000 466L1072 416" fill="none" stroke={wall} strokeWidth="11" />
        <path d="M52 346L1000 462" stroke="#4c4c46" strokeWidth="2" />
        <path d="M52 440L1000 556L1080 505" fill="none" stroke={wall} strokeWidth="10" />
        <path d="M50 445L1060 560L1000 582L50 475z" fill="#74746c" />
        <path d="M50 447L75 467L1000 580V654L605 606L587 621L535 615V596H515L497 623L445 616V586L75 541L50 522z" fill="url(#base)" />
        <path d="M50 447L75 467L1000 580" fill="none" stroke="#55554e" strokeWidth="2" />
        <path d="M445 310h68v190h-68zM535 320h84v76l-84-8z" fill="#92928a" />
        <path d="M535 405l84 10v76l-84-8z" fill="#92928a" />
        <path d="M495 492l90 6-10 12-90-8z" fill="#a0a098" />
      </g>
      <g transform="translate(1400 110) scale(.3333)">
        {levels.map((i) => <Storey key={i} i={i} />)}
        {/* lift core */}
        <rect x="537" y="130" width="60" height="1540" fill="#8e8e86" />
        <rect x="597" y="270" width="20" height="1400" fill="url(#core)" />
        <rect x="617" y="290" width="28" height="1380" fill="#55564e" />
        <rect x="645" y="290" width="56" height="1380" fill="#8f8f87" />
        <rect x="701" y="370" width="40" height="1300" fill="url(#core)" />
        <rect x="701" y="370" width="40" height="1300" fill="url(#coreWide)" />
        {Array.from({ length: 17 }, (_, i) => {
          const y = 270 + i * 79.7;
          return (
            <g key={i}>
              <path d={`M537 ${y + 4}l60 4`} stroke="#5c5c54" strokeDasharray="10 4" strokeWidth="1.500" />
              <path d={`M617 ${y + 48}h28M617 ${y + 72}h28`} stroke={lite} strokeWidth="3" />
              <path d={`M597 ${y + 6}l150 14`} stroke={wall} strokeWidth="9" />
              <path d={`M600 ${y + 2}l150 14`} stroke="#4a4a44" strokeWidth="4" />
            </g>
          );
        })}
        {/* penthouse */}
        <path d="M597 145H760V250H597z" fill="#fff" />
        <path d="M597 195l270 15-80 70-190-45z" fill="#55564e" />
        <path d="M650 230l35-24h15v30z" fill="#fff" />
        <path d="M595 145l160 12v24l-160-20z" fill="#4e4f47" />
        <path d="M597 168l158 18M597 238l160 20v22M645 235l110 12M760 250l60-46" stroke={lite} strokeWidth="6" fill="none" />
        <path d="M700 180l40 5v30l-28 22h-12z" fill={wall} />
        <path d="M750 150h14v218h-14zM795 230h14v110h-14zM810 75h14v145h-14zM862 212h13v82h-13zM597 170h16v22h-16z" fill={wall} />
        <path d="M755 262l118-50M764 285l40-30M755 182l65-38" stroke={wall} strokeWidth="8" />
        <path d="M755 160l58-40v12l-58 44z" fill="#4e4f47" />
        <path d="M540 128l22-12 245 5-52 32z" fill="#5a5b53" stroke={lite} strokeWidth="5" />
        <path d="M562 84l62-38 200 20v50l-60 14z" fill="#84847a" />
        <path d="M562 82L735 100V143L562 124z" fill="#8a8a80" />
        <path d="M735 100l28-18v45l-28 16z" fill="#7c7c74" />
        <path d="M562 82L624 46 822 66 808 72 730 68 765 82 735 100z" fill="#50514a" stroke="#c0c0b4" strokeWidth="3" />
        <path d="M600 64l130 12" stroke="#c0c0b4" strokeWidth="2" />
        {/* roof terrace box */}
        <path d="M803 340l42-26 175 16v48l-40 14-177-22z" fill="#84847a" />
        <path d="M803 342l174 12 43-24-175-16z" fill="#77776f" stroke="#b0b0a4" strokeWidth="2" />
        <path d="M803 342l174 12v38l-174-22z" fill="#8a8a82" />
        <rect x="884" y="302" width="12" height="14" fill="#d8d8cc" />
      </g>
      {/* highlighted slab */}
      <g transform="translate(1400 600) scale(.4005 .3333)">
        <path d="M52 264L215 135L1187 253V264L1020 396L490 332V322L497 314L470 312L447 326L52 277z" fill="#b40000" />
        <path d="M52 270L447 321M490 326L1018 391L1187 259" fill="none" stroke="#f00000" strokeWidth="9" />
        <path d="M56 262L215 139L1187 255" fill="none" stroke="#e80000" strokeWidth="5" />
        <path d="M190 275L340 153M335 290L490 172M450 318L615 185M545 320L695 197M690 345L740 300V270L815 210M815 360L862 330L880 285L950 228M1000 290L1045 240M95 240L1000 350M140 200L1080 305M170 175L700 240L1090 290M860 330L1000 345M980 385L1040 340" fill="none" stroke="#800000" strokeWidth="4" />
        <path d="M470 312L500 285M1000 380L1035 355" stroke="#f00000" strokeWidth="6" />
        <path d="M957 236l84 10-8 10-84-12zM1140 273l22-12 4 2-16 14zM555 313l20-14 30 4-16 16zM592 324l24-14 36 6-22 14z" fill="#f4f0ee" />
        <path d="M1003 383l26-22 3 2-24 22z" fill="#e8d8d8" />
      </g>
      {[{ x: 1581, y: 767 }, { x: 1406, y: 889 }].map((o) => (
        <g key={o.x} transform={`translate(${o.x} ${o.y})`} fontFamily="Liberation Sans, sans-serif" fontSize="11">
          <path d="M0 0V-34" stroke="#0000e0" strokeWidth="1.500" /><path d="M-2.500-30h5L0-39z" fill="#0000c0" />
          <path d="M0 0l30 4" stroke="#f00000" strokeWidth="1.500" /><path d="M28 1l10 3.500-10 2z" fill="#d00000" />
          <path d="M0 0l12-8" stroke="#00d000" strokeWidth="1.500" /><path d="M8-8l6-3 2 2-4 5z" fill="#00a800" />
          <text x="-3" y="-43" fill="#0000e0">Z</text><text x="43" y="10" fill="#e00000">X</text><text x="15" y="-9" fill="#00e000">Y</text>
        </g>
      ))}
    </svg>
  );
}

/* ---------- callouts drawn over both windows ---------- */

const Callouts = styled.svg`
  position: absolute;
  inset: 0;
  pointer-events: none;
  filter: drop-shadow(4px 5px 2px rgba(0, 0, 0, 0.4));
`;

export default function App() {
  return (
    <Page>
      <Global />
      <AppWindow $share={920}>
        <Chrome idle on={["nav", "table"]} />
        <Workspace>
          <Dock>
            <DockTitle>Project Navigator - Data</DockTitle>
            <TreeBox>
              <Tree>
                <li>
                  <TreeRow $strong><Toggle aria-label="Collapse" /><Icon n="modelDoc" s={15} />1* [Scenario]</TreeRow>
                  <Branch>
                    <li>
                      <TreeRow><Toggle aria-label="Collapse" /><Icon n="folderOpen" s={16} />Model Data</TreeRow>
                      <Leaves>
                        {nodes.map(([t, k]) => <li key={t}><Leaf><FolderIcon k={k} />{t}</Leaf></li>)}
                      </Leaves>
                    </li>
                  </Branch>
                </li>
              </Tree>
              <ScrollTrack><svg width="8" height="6" viewBox="0 0 8 6"><path d="M1 5l3-3.500L7 5" fill="none" stroke="#444" strokeWidth="1.500" /></svg></ScrollTrack>
            </TreeBox>
          </Dock>
          <Canvas />
        </Workspace>
        <ModelDialog />
      </AppWindow>

      <AppWindow $share={1073} $tall>
        <Chrome on={["nav", "planeA"]} />
        <Workspace>
          <Dock>
            <DockTitle>Project Navigator - CAD/BIM model</DockTitle>
            <PanelStack>
              <Pane $grow={257}>
                <PaneLabel $bold>CAD/BIM models:</PaneLabel>
                <ListBox><ModelItem><input type="checkbox" defaultChecked />Index A.ifc - 160617-Edificio-INS-v001</ModelItem></ListBox>
                <ActionBar>
                  <IconButton $focus aria-label="Import model"><Icon n="folderArrow" s={16} /></IconButton>
                  <IconButton aria-label="Replace model"><Icon n="folderArrow" s={16} /></IconButton>
                  <IconButton $off aria-label="Delete model"><Icon n="del" s={15} /></IconButton>
                </ActionBar>
              </Pane>
              <LowerPane $grow={299}>
                <PaneLabel>Layers and elements:</PaneLabel>
                <ListBox />
              </LowerPane>
              <LowerPane $grow={297}>
                <PropertyTable>
                  <thead><tr><th>Name</th><th>Value</th></tr></thead>
                  <tbody><tr><td /><td /></tr></tbody>
                </PropertyTable>
                <PaneFooter />
              </LowerPane>
            </PanelStack>
            <BottomTabs>
              <BottomTab href="#"><Icon n="data" s={16} />Data</BottomTab>
              <BottomTab href="#"><Icon n="display" s={16} />Display</BottomTab>
              <BottomTab href="#"><Icon n="views" s={14} />Views</BottomTab>
              <BottomTab href="#" $on><Icon n="cad" s={14} />CAD/BIM model</BottomTab>
            </BottomTabs>
          </Dock>
          <Canvas>
            <Tower />
            <ContextMenu>
              <li><button>Create Member(s)...</button></li>
              <li><button>Create Surface(s)...</button></li>
              <li><button>Create Solid(s)...</button></li>
            </ContextMenu>
          </Canvas>
        </Workspace>
        <StatusBar />
      </AppWindow>

      <Callouts width="2028" height="1056" viewBox="0 0 2028 1056" fill="none" stroke="#c00000" aria-hidden="true">
        <path d="M121 133C150 195 270 217 372 195" strokeWidth="3" />
        <path d="M368 187l17 6-13 9z" fill="#c00000" stroke="none" />
        <path d="M959 357C990 330 1020 300 1019 274C1016 250 984 240 988 192" strokeWidth="3" />
        <path d="M981 194l9-13 6 15z" fill="#c00000" stroke="none" />
        <path d="M791 694C850 730 970 795 1112 825C1166 838 1178 880 1177 990" strokeWidth="3" />
        <path d="M1170 986h14l-7 14z" fill="#c00000" stroke="none" />
        <rect x="320" y="545" width="154" height="35" strokeWidth="2" />
        <rect x="939" y="349" width="102" height="40" strokeWidth="2" />
      </Callouts>
    </Page>
  );
}
